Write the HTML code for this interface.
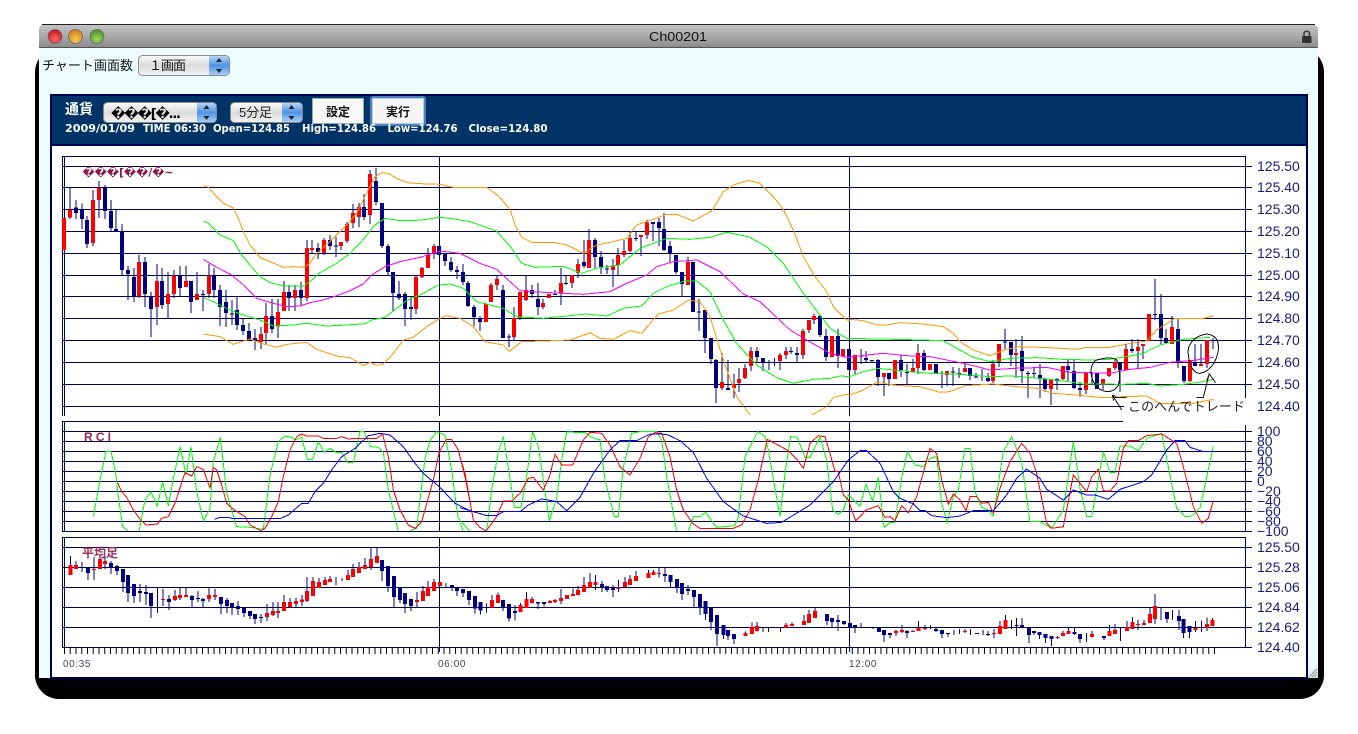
<!DOCTYPE html>
<html><head><meta charset="utf-8"><title>Ch00201</title>
<style>
html,body{margin:0;padding:0;background:#fff;width:1358px;height:734px;overflow:hidden}
svg{display:block;position:absolute;left:0;top:0}
svg path,svg polyline{vector-effect:non-scaling-stroke;fill:none}
.w{stroke:#000078;stroke-width:1;shape-rendering:crispEdges}
.n{stroke:#000080;stroke-width:4;shape-rendering:crispEdges}
.r{stroke:#ff0000;stroke-width:4;shape-rendering:crispEdges}
.l{stroke-width:1;shape-rendering:crispEdges}
.o{stroke:#ff9900}.g{stroke:#00ff00}.m{stroke:#ff00ff}.b{stroke:#0000ff}.d{stroke:#ff0000}
.grid{stroke:#000058;stroke-width:1;shape-rendering:crispEdges;fill:none}
.ax{font:14px "Liberation Sans",sans-serif;fill:#1c1c78}
.hw{stroke:#111;stroke-width:1;fill:none;shape-rendering:crispEdges}
</style></head><body>
<svg width="1358" height="734" viewBox="0 0 1358 734" xmlns="http://www.w3.org/2000/svg">
<defs>
<linearGradient id="tb" x1="0" y1="0" x2="0" y2="1"><stop offset="0" stop-color="#c4c4c4"/><stop offset=".5" stop-color="#a9a9a9"/><stop offset="1" stop-color="#8c8c8c"/></linearGradient>
<linearGradient id="sel" x1="0" y1="0" x2="0" y2="1"><stop offset="0" stop-color="#fbfbfb"/><stop offset=".5" stop-color="#dcdcdc"/><stop offset="1" stop-color="#f2f2f2"/></linearGradient>
<linearGradient id="blu" x1="0" y1="0" x2="0" y2="1"><stop offset="0" stop-color="#b5d3f5"/><stop offset=".5" stop-color="#4f93e6"/><stop offset="1" stop-color="#a6cff5"/></linearGradient>
<radialGradient id="rd" cx=".5" cy=".7" r=".7"><stop offset="0" stop-color="#f56a6a"/><stop offset="1" stop-color="#c0141c"/></radialGradient>
<radialGradient id="ye" cx=".5" cy=".7" r=".7"><stop offset="0" stop-color="#f9c95a"/><stop offset="1" stop-color="#d07a10"/></radialGradient>
<radialGradient id="gr" cx=".5" cy=".7" r=".7"><stop offset="0" stop-color="#a0d865"/><stop offset="1" stop-color="#468c1e"/></radialGradient>
<clipPath id="rc"><rect x="60" y="421" width="1190" height="110"/></clipPath>
<clipPath id="mc"><rect x="60" y="156" width="1190" height="260"/></clipPath>
</defs>

<!-- shadow + window -->
<rect x="35" y="48" width="1289" height="651" rx="24" fill="#000"/>
<path d="M39 678V30Q39 24.500 45 24.500H1312Q1318 24.500 1318 30V678Z" style="fill:#edfdfd"/>
<path d="M39 47.500V30Q39 24.500 45 24.500H1312Q1318 24.500 1318 30V47.500Z" style="fill:url(#tb)"/>
<rect x="42" y="24" width="1273" height="1" fill="#222"/>
<rect x="39" y="47" width="1279" height="1" fill="#555"/>
<circle cx="55" cy="36.500" r="7" fill="url(#rd)" stroke="#666" stroke-width=".7"/>
<circle cx="75.500" cy="36.500" r="7" fill="url(#ye)" stroke="#666" stroke-width=".7"/>
<circle cx="97" cy="36.500" r="7" fill="url(#gr)" stroke="#666" stroke-width=".7"/>
<text x="649" y="41" textLength="58" lengthAdjust="spacingAndGlyphs" style="font:13px 'Liberation Sans',sans-serif;fill:#111">Ch00201</text>
<rect x="1302" y="36" width="9.500" height="7" rx="1" fill="#333"/>
<path d="M1304 36V33.500Q1304 31.300 1306.700 31.300Q1309.500 31.300 1309.500 33.500V36" style="stroke:#333;stroke-width:1.400"/>

<!-- top control -->
<text x="42" y="70" textLength="91" style="font:13px 'Liberation Sans','Noto Sans CJK JP',sans-serif;fill:#111">チャート画面数</text>
<rect x="138.500" y="55.500" width="91" height="20" rx="4" fill="url(#sel)" stroke="#8a8a8a"/>
<path d="M209 56H225Q229 56 229 60V71Q229 75 225 75H209Z" style="fill:url(#blu)"/>
<path d="M216 62L219 58L222 62ZM216 69L219 73L222 69Z" style="fill:#222"/>
<text x="149" y="70" textLength="37" style="font:13px 'Liberation Sans','Noto Sans CJK JP',sans-serif;fill:#111">１画面</text>

<!-- panel -->
<rect x="51" y="95" width="1256" height="583" fill="#fff" stroke="#000050" stroke-width="2"/>
<rect x="51" y="95" width="1256" height="50" fill="#003366" stroke="#000050" stroke-width="2"/>
<text x="65" y="114" textLength="28" style="font:bold 14px 'Liberation Sans','Noto Sans CJK JP',sans-serif;fill:#fff">通貨</text>
<rect x="103.500" y="102.500" width="113" height="20" rx="4" fill="url(#sel)" stroke="#8a8a8a"/>
<path d="M197 103H212Q216 103 216 107V118Q216 122 212 122H197Z" style="fill:url(#blu)"/>
<path d="M203.500 109L206.500 105L209.500 109ZM203.500 116L206.500 120L209.500 116Z" style="fill:#222"/>
<text x="111" y="118" textLength="70" style="font:13px 'DejaVu Sans',sans-serif;fill:#000;font-weight:bold">���[�...</text>
<rect x="230.500" y="102.500" width="72" height="20" rx="4" fill="url(#sel)" stroke="#8a8a8a"/>
<path d="M282 103H298Q302 103 302 107V118Q302 122 298 122H282Z" style="fill:url(#blu)"/>
<path d="M288.500 109L291.500 105L294.500 109ZM288.500 116L291.500 120L294.500 116Z" style="fill:#222"/>
<text x="239" y="117" textLength="33" style="font:13px 'Liberation Sans','Noto Sans CJK JP',sans-serif;fill:#222">5分足</text>
<rect x="312.500" y="98.500" width="51" height="25" fill="#f8f8f8" stroke="#9aa" stroke-width="1"/>
<text x="326" y="116" textLength="24" style="font:bold 12px 'Liberation Sans','Noto Sans CJK JP',sans-serif;fill:#111">設定</text>
<rect x="370" y="96" width="56" height="30" rx="3" fill="#4a7fc0"/>
<rect x="372.500" y="98.500" width="51" height="25" fill="#f5f5f5" stroke="#bcd"/>
<text x="386" y="116" textLength="24" style="font:bold 12px 'Liberation Sans','Noto Sans CJK JP',sans-serif;fill:#111">実行</text>
<g style="font:bold 11px 'DejaVu Sans',sans-serif;fill:#fff">
<text x="65" y="132" textLength="70" lengthAdjust="spacingAndGlyphs">2009/01/09</text>
<text x="143" y="132" textLength="63" lengthAdjust="spacingAndGlyphs">TIME 06:30</text>
<text x="213" y="132" textLength="77" lengthAdjust="spacingAndGlyphs">Open=124.85</text>
<text x="302" y="132" textLength="74" lengthAdjust="spacingAndGlyphs">High=124.86</text>
<text x="387.500" y="132" textLength="70" lengthAdjust="spacingAndGlyphs">Low=124.76</text>
<text x="468.500" y="132" textLength="79" lengthAdjust="spacingAndGlyphs">Close=124.80</text>
</g>

<!-- main grid -->
<path class="grid" d="M62.500 156.500H1246M62 166.500H1252M62 187.500H1252M62 209.500H1252M62 231.500H1252M62 253.500H1252M62 275.500H1252M62 296.500H1252M62 318.500H1252M62 340.500H1252M62 362.500H1252M62 384.500H1252M62 406.500H1252M62.500 156V416M64.500 156V416M439.500 156V416M849.500 156V416M1245.500 156V416"/>
<!-- main candles -->
<g transform="translate(60,150) scale(.33333)">
<path class="w" d="M30 112V207M48 150V207M66 160V237M81 198V294M99 120V288M117 93V204M135 105V207M153 150V243M168 180V246M186 222V375M204 348V450M222 354V456M237 315V444M255 321V471M273 426V561M291 342V525M306 354V477M324 366V504M342 360V444M360 348V438M378 348V411M393 393V489M411 366V450M429 420V483M423 433H435M447 342V444M462 354V444M480 405V528M498 420V531M516 450V525M510 492H522M531 441V540M549 507V555M567 519V570M585 537V600M603 531V597M618 459V582M636 447V549M654 447V564M672 393V483M687 405V483M705 405V483M723 396V468M741 270V453M756 270V312M774 279V327M792 264V315M810 255V300M828 261V321M822 288H834M843 276V300M861 216V279M879 162V234M897 159V231M912 132V210M930 60V222M948 54V165M966 159V294M984 282V375M999 366V483M1017 393V450M1035 426V528M1053 441V510M1068 378V492M1086 351V384M1104 294V354M1122 282V327M1137 288V315"/>
<path class="n" d="M48 172V189M66 178V207M81 210V282M135 112V183M153 183V234M168 237V246M186 244V360M204 360V372M222 381V439M255 336V432M273 439V477M306 393V465M360 376V414M393 393V456M462 376V420M480 420V471M498 456V489M531 480V525M549 525V543M567 543V570M585 564V573M636 498V537M687 426V444M723 420V444M774 294V306M810 270V288M912 171V201M948 93V156M966 159V288M984 288V366M999 366V429M1017 432V444M1035 432V477M1053 471V477M1137 288V315"/>
<path class="r" d="M12 204V300M30 178V202M99 150V279M117 112V150M237 336V439M291 393V471M324 432V462M342 376V432M378 393V411M411 432V450M447 376V432M603 552V576M618 498V549M654 486V529M672 426V483M705 420V444M741 294V444M756 294V300M792 270V309M843 276V288M861 222V273M879 189V219M897 171V201M930 72V195M1068 381V477M1086 354V381M1104 315V354M1122 288V310"/>
</g>
<g transform="translate(440,150) scale(.33333)">
<path class="w" d="M15 310V348M33 321V366M51 348V387M69 342V405M84 393V471M102 465V528M120 498V543M138 459V516M153 399V456M171 378V420M189 405V564M207 552V591M201 561H213M222 471V570M240 426V510M258 378V453M276 405V444M294 399V495M309 447V477M327 432V444M345 420V435M339 433H351M363 354V465M378 378V405M372 400H384M396 375V414M414 327V384M432 270V354M447 237V354M465 264V354M483 303V372M501 345V372M495 357H507M519 327V411M534 294V375M552 270V321M570 243V306M588 243V273M582 266H594M603 258V318M621 210V267M639 216V273M657 204V288M672 189V303M690 273V336M708 315V372M726 366V438M744 321V405M759 336V486M777 447V543M771 486H783M795 480V609M813 564V642M828 627V759M846 609V720M864 630V720M882 672V744M897 654V726M915 642V687M933 591V663M951 591V636M969 624V663M987 630V660M1003 624V648M1020 609V660M1038 591V627M1053 591V612M1047 605H1059M1071 591V637M1089 537V627M1107 510V549M1122 492V522M1140 495V561M1158 537V633M1176 558V621M1194 537V654M1209 597V618M1227 597V660"/>
<path class="n" d="M15 310V333M33 336V360M51 360V366M69 366V396M84 399V468M102 471V501M120 504V516M189 420V564M276 420V432M294 447V471M432 336V348M465 270V321M483 321V351M639 216V222M657 216V234M672 237V300M690 288V310M708 315V366M726 366V402M759 336V486M795 480V564M813 564V627M828 630V714M864 714V720M951 603V621M969 624V636M1071 609V615M1140 498V555M1158 558V621M1194 558V618M1227 597V660"/>
<path class="r" d="M138 462V516M153 405V456M171 387V405M222 504V561M240 426V504M258 420V450M309 459V471M327 432V444M363 399V429M396 375V399M414 342V369M447 270V354M519 348V360M534 315V345M552 303V315M570 264V303M603 255V261M621 217V255M744 336V405M846 696V714M882 702V714M897 687V699M915 654V684M933 603V648M1020 615V633M1038 603V615M1089 543V615M1107 510V540M1122 498V510M1176 558V621M1209 597V618"/>
</g>
<g transform="translate(850,260) scale(.33333)">
<path class="w" d="M15 285V342M33 267V312M27 288H39M48 273V309M66 300V309M60 302H72M84 297V378M102 339V408M117 339V378M135 300V357M153 285V351M171 312V372M165 337H177M189 297V336M204 252V342M222 270V333M240 312V330M258 312V342M276 333V384M291 333V378M309 321V378M303 336H315M327 324V354M321 341H333M345 309V336M360 324V360M378 339V354M372 351H384M396 327V363M414 339V366M429 300V369M447 252V321M465 207V267M459 246H471M483 246V318M498 237V354M516 228V369M534 333V414M528 340H540M552 324V354M546 341H558M570 312V414M585 354V396M603 357V435M621 354V390M639 318V360M654 300V366M672 297V387M690 366V411M708 339V402M726 339V372M741 337V387M759 357V390M777 324V351M795 300V330M810 306V396M828 252V330M846 237V279M864 237V324M879 252V297M897 162V243M915 57V180M909 163H921M933 102V252M948 207V252M966 168V252M984 175V324M1002 318V369M1020 300V366M1035 252V318M1053 252V315M1071 240V324M1089 234V267M1083 242H1095"/>
<path class="n" d="M48 294V300M84 300V351M117 339V357M153 300V330M222 279V330M258 312V342M360 324V348M414 354V363M483 246V285M516 273V333M570 345V357M585 357V387M621 357V363M654 318V330M672 333V384M690 384V390M741 337V387M810 306V330M846 267V273M933 162V234M948 234V249M984 207V306M1002 318V363M1035 309V318"/>
<path class="r" d="M15 285V330M102 339V351M135 300V357M189 324V336M204 279V324M240 312V330M291 333V345M345 324V336M429 312V363M447 252V306M498 279V285M603 357V387M639 318V357M708 339V390M759 357V375M777 324V348M795 306V324M828 267V330M864 261V273M879 252V258M897 162V243M966 201V252M1020 300V363M1053 312V318M1071 240V312"/>
</g>
<!-- main indicator lines -->
<g transform="translate(60,150) scale(.33333)">
<polyline class="l o" points="430,106 445,112 465,135 490,160 520,174 535,205 550,245 570,285 600,322 630,335 670,352 700,350 725,352 745,345 770,310 810,275 860,225 890,190 912,145 930,110 945,80 965,68 985,70 1010,85 1040,98 1080,101 1140,103"/>
<polyline class="l g" points="430,213 445,220 480,255 520,272 545,315 570,345 600,380 630,398 670,408 700,408 730,408 750,395 780,368 830,340 870,310 910,268 945,225 975,205 1020,212 1060,212 1100,208 1140,202"/>
<polyline class="l m" points="430,328 470,352 515,375 550,405 590,445 640,460 680,470 720,468 750,458 790,450 830,437 870,422 910,402 935,375 975,350 1020,335 1080,322 1140,303"/>
<polyline class="l g" points="430,442 470,460 510,480 550,495 600,510 640,528 700,525 740,520 800,528 860,525 915,521 935,510 975,502 1010,475 1040,452 1090,430 1135,405"/>
<polyline class="l o" points="430,552 480,560 520,583 570,567 610,582 650,592 680,583 740,577 770,598 830,618 870,623 910,647 930,637 950,646 970,642 1000,610 1030,570 1060,562 1100,530 1140,505"/>
</g>
<g transform="translate(440,150) scale(.33333)">
<polyline class="l o" points="0,103 40,112 140,112 175,138 210,178 225,225 245,262 275,277 340,277 380,285 430,310 470,285 510,277 560,265 590,225 640,208 680,193 710,193 760,213 815,183 850,125 880,105 925,91 960,100 1000,140 1030,178 1060,240 1090,320 1125,380 1160,425 1180,470 1220,510 1230,512"/>
<polyline class="l g" points="0,202 30,205 90,215 170,243 215,295 245,340 285,352 370,349 425,370 470,355 540,345 600,295 680,265 750,268 810,262 860,247 925,260 980,290 1030,340 1090,430 1140,495 1170,535 1220,565 1230,565"/>
<polyline class="l m" points="0,303 60,310 120,340 170,358 210,395 240,422 290,426 430,433 510,425 560,400 620,375 650,350 700,335 770,330 840,365 910,432 960,455 1050,540 1100,570 1170,610 1220,622 1230,622"/>
<polyline class="l g" points="0,405 30,402 70,415 110,455 190,475 230,500 310,505 440,492 500,498 550,475 605,468 640,430 680,410 735,393 770,393 810,425 850,510 890,580 950,645 1010,683 1060,700 1120,688 1170,685 1200,678 1230,680"/>
<polyline class="l o" points="0,505 20,497 60,505 100,530 135,575 190,585 208,604 245,575 340,572 390,570 450,548 480,565 520,568 570,542 605,550 655,492 700,480 745,450 780,455 810,500 850,630 890,740 930,795"/>
<polyline class="l o" points="1115,795 1160,770 1180,742 1220,733 1230,735"/>
</g>
<g transform="translate(850,260) scale(.33333)">
<polyline class="l o" points="0,178 40,182 80,195 110,195 150,188 220,192 280,200 310,220 330,245 370,270 420,287 470,268 510,260 600,263 680,268 710,262 780,262 840,250 890,243 920,210 975,175 1060,175 1090,168"/>
<polyline class="l g" points="0,235 70,237 140,238 280,242 320,265 370,292 420,305 480,295 560,293 640,298 720,300 780,298 830,290 880,280 930,255 1000,238 1080,232"/>
<polyline class="l m" points="0,291 50,285 100,280 170,287 240,290 290,300 350,312 420,330 490,325 590,322 660,337 720,338 780,340 840,328 900,322 960,307 1040,300 1090,292"/>
<polyline class="l g" points="0,350 40,335 85,325 130,330 180,335 240,340 320,342 420,350 480,348 540,352 620,360 700,372 820,373 890,370 930,378 1000,373 1060,365 1090,358"/>
</g>

<!-- RCI frame -->
<path class="grid" d="M62 421.500H1123M62 431.500H1252M62 441.500H1252M62 451.500H1252M62 461.500H1252M62 471.500H1252M62 481.500H1252M62 491.500H1252M62 501.500H1252M62 511.500H1252M62 521.500H1252M62 531.500H1252M62.500 421V531M64.500 421V531M439.500 421V531M849.500 421V531M1245.500 425V531"/>
<g clip-path="url(#rc)">
<g transform="translate(50,420) scale(.33333)">
<polyline class="l g" points="130,290 150,180 168,94 183,94 198,165 205,230 218,320 235,334 250,350 268,330 285,240 303,215 322,258 338,185 355,258 370,175 391,80 408,165 423,80 440,215 460,302 480,265 490,125 511,52 530,220 560,320 600,322 640,328 660,165 685,65 705,48 725,52 735,60 755,52 772,118 788,118 805,65 823,97 840,85 858,97 875,97 893,127 910,127 930,35 942,35 962,80 985,82 1000,97 1015,210 1045,334 1065,350 1085,330 1100,325 1125,115 1140,62 1160,35 1185,45 1205,150 1220,265 1225,295 1260,334"/>
<polyline class="l d" points="203,188 215,215 230,232 250,270 272,300 288,315 322,312 335,295 355,290 375,250 405,158 425,168 440,140 460,148 480,205 490,142 500,150 515,195 530,250 550,268 585,290 600,315 632,332 645,325 665,290 685,245 700,170 720,90 740,50 755,42 770,48 805,48 820,55 860,55 875,50 895,57 915,55 980,55 998,42 1015,110 1030,210 1050,270 1075,315 1095,325 1115,305 1150,180 1168,95 1190,58 1205,58 1225,90 1245,170 1260,245"/>
<polyline class="l b" points="493,298 510,292 535,292 550,296 690,296 715,285 755,250 775,250 795,215 820,190 845,150 875,110 915,85 955,47 990,40 1020,45 1060,80 1095,130 1120,160 1168,200 1215,250 1260,272"/>
</g>
<g transform="translate(460,420) scale(.33333)">
<polyline class="l g" points="0,310 10,334 45,350 80,330 95,210 115,95 130,50 150,175 163,262 183,262 200,170 218,36 235,80 250,180 268,302 290,235 305,120 320,36 375,38 395,52 420,60 435,180 463,290 475,290 490,140 515,40 540,35 590,35 605,60 620,170 650,334 668,350 685,334 700,290 720,290 737,277 770,322 825,317 835,290 855,110 893,35 915,50 925,90 960,290 975,160 992,50 1012,52 1035,112 1050,112 1080,50 1100,120 1118,270 1135,283 1150,270 1165,225 1200,260"/>
<polyline class="l d" points="0,112 15,160 40,300 60,322 78,333 110,290 130,243 155,243 180,220 205,175 220,172 250,210 270,165 285,103 305,135 338,135 370,60 390,37 425,40 450,75 480,140 510,165 540,115 565,50 585,38 605,40 630,110 650,210 670,270 700,312 720,325 820,325 845,315 870,270 895,180 922,58 985,92 1012,120 1030,145 1050,70 1075,47 1095,50 1110,100 1125,155 1135,155 1150,225 1165,240 1187,303 1200,290"/>
<polyline class="l b" points="0,263 40,275 80,287 110,287 130,275 180,275 205,255 245,237 265,240 290,245 320,272 360,232 400,160 450,90 480,62 530,62 570,42 620,43 660,62 700,97 740,175 790,245 850,288 920,310 965,307 1050,255 1120,185 1165,120 1200,92"/>
</g>
<g transform="translate(860,420) scale(.33333)">
<polyline class="l g" points="0,260 18,192 38,243 55,172 72,322 90,308 105,308 125,175 142,95 165,135 190,140 210,115 230,110 245,250 262,308 280,230 295,210 315,85 330,85 345,215 365,262 385,270 400,288 430,95 455,50 485,125 510,305 540,305 575,325 610,270 640,65 660,205 680,290 695,290 730,95 750,157 765,157 780,78 810,78 835,92 860,55 905,40 925,140 950,265 975,290 995,288 1020,265 1060,78"/>
<polyline class="l d" points="0,290 18,270 55,257 75,292 90,290 105,302 125,257 145,278 170,230 210,85 230,100 245,180 265,252 280,222 300,240 318,272 330,230 350,230 365,250 385,247 400,280 420,205 450,125 485,70 510,100 530,160 560,310 575,325 610,320 640,165 680,215 695,170 715,148 730,212 750,213 770,190 790,85 805,62 835,62 860,47 905,42 950,70 970,140 1000,260 1025,310 1045,295 1060,242"/>
<polyline class="l b" points="0,92 20,92 60,130 100,215 120,235 160,252 180,272 195,272 215,287 260,293 300,288 340,272 400,272 440,225 470,175 500,147 540,175 560,208 610,240 640,210 680,225 705,225 745,238 780,208 850,185 875,165 920,90 945,62 975,62 990,82 1030,95 1060,95"/>
</g>
</g>

<!-- Heikin frame -->
<path class="grid" d="M62 537.500H1246M62 547.500H1252M62 567.500H1252M62 587.500H1252M62 607.500H1252M62 627.500H1252M62 647.500H1252M62.500 537V647M64.500 537V647M439.500 537V652M849.500 537V652M1245.500 537V647"/>
<line x1="64" y1="651" x2="1215" y2="651" stroke="#000" stroke-width="6" stroke-dasharray="1 4.750"/>
<g transform="translate(50,530) scale(.33333)">
<path class="w" d="M61 78V135M78 93V117M96 96V126M114 112V150M132 81V150M150 72V117M165 78V117M183 93V132M201 105V135M219 117V186M234 135V216M252 162V219M270 162V216M288 165V225M303 189V264M323 174V249M339 177V228M357 195V240M375 180V213M390 174V210M408 174V198M426 195V231M444 183V216M459 204V234M477 174V216M495 177V210M513 201V252M531 204V249M546 219V255M564 213V255M582 234V261M600 243V267M615 252V282M633 252V279M651 222V273M669 216V258M684 216V264M702 195V243M720 204V231M738 204V231M756 195V228M771 141V216M789 141V198M807 144V174M825 141V165M840 138V156M858 141V165M876 144V153M894 120V150M909 102V141M927 96V129M945 84V117M963 54V120M981 54V99M996 90V153M1014 108V186M1032 138V232M1050 171V219M1065 189V249M1083 207V243M1101 186V232M1119 168V213M1134 153V198M1152 147V183M1170 156V168M1188 159V171M1206 165V183M1221 172V198M1239 177V201M1257 183V225"/>
<path class="n" d="M114 112V129M183 99V113M201 108V123M219 117V156M234 135V189M252 162V198M270 183V189M288 186V192M303 189V228M357 207V216M426 198V210M444 204V207M459 207V213M513 201V222M531 210V228M546 219V234M564 228V237M582 234V249M600 243V258M615 252V267M633 261V264M996 90V123M1014 108V168M1032 138V201M1050 171V210M1065 189V222M1083 207V228M1206 165V172M1221 172V183M1239 177V189M1257 183V210"/>
<path class="r" d="M61 105V135M78 105V117M132 117V120M150 87V117M165 93V102M339 207V210M375 198V210M390 195V204M408 195V201M477 195V207M495 195V201M651 249V261M669 243V255M684 243V249M702 216V243M720 216V231M738 213V222M756 209V216M771 183V213M789 153V198M807 156V174M825 150V165M840 147V156M894 135V150M909 117V141M927 111V129M945 105V117M963 87V111M981 78V99M1101 210V216M1119 183V213M1134 171V198M1152 156V183M1170 156V168"/>
</g>
<g transform="translate(460,535) scale(.51020,.33333)">
<path class="w" d="M29 183V235M40 201V238M52 205V232M63 180V217M74 172V204M84 195V228M96 207V260M108 210V256M119 204V231M130 171V219M141 186V205M153 201V222M165 201V214M176 195V204M186 192V204M198 162V207M210 180V192M221 160V183M231 153V180M243 126V171M255 114V159M266 120V165M278 138V171M288 153V171M300 150V186M311 135V171M323 126V156M333 120V150M345 108V138M369 105V129M379 105V120M390 96V128M402 98V141M413 120V156M425 132V174M435 144V195M447 150V180M459 165V216M470 177V240M481 198V255M492 216V285M504 240V333M516 270V312M525 285V315M537 297V327M560 290V303M572 262V297M582 261V290M594 277V291M605 279V291M628 276V291M639 264V279M651 262V273M674 240V270M684 225V264M696 219V249M719 237V270M729 249V276M741 240V288M753 258V270M764 264V276M774 270V294M786 264V279M798 276V279M809 279V282M821 276V291M831 285V321M843 294V309M855 285V303M866 270V294M876 285V309M888 285V291M899 258V288M911 270V285M922 270V282M933 279V291M945 285V309M956 294V306M968 285V300M979 282V297M990 282V294M1001 282V300M1025 285V300M1035 288V303M1047 282V309M1058 258V297M1069 240V282M1081 255V282M1091 249V303M1102 249V276M1115 279V324M1125 288V300M1136 291V312M1148 297V324M1159 303V333M1171 303V312M1182 288V303M1193 279V297M1204 279V300M1215 297V324M1228 294V321M1239 288V306M1262 303V315M1273 270V303M1284 267V297M1295 279V318M1307 258V288M1318 246V282M1329 255V285M1341 255V270M1352 219V264M1362 177V267M1374 219V255M1386 231V264M1397 225V255M1409 225V285M1418 252V309M1430 273V309M1442 258V291M1453 256V291M1464 247V288M1475 249V273"/>
<path class="n" d="M29 183V221M40 201V227M84 195V217M96 207V251M108 228V234M153 201V205M165 201V207M278 147V156M288 153V165M300 159V165M402 117V123M413 120V141M425 132V156M435 144V177M447 162V168M459 165V186M470 177V219M481 198V237M492 216V261M504 240V297M516 270V300M525 285V303M537 297V312M719 237V258M729 249V261M741 255V261M753 258V267M764 264V276M774 270V276M821 279V291M831 285V300M843 294V300M876 288V294M933 282V288M945 285V297M956 294V297M1013 294V297M1035 297V300M1091 270V273M1102 270V276M1115 279V300M1125 288V294M1136 291V300M1148 297V309M1159 303V312M1204 291V297M1215 297V312M1262 303V309M1386 231V252M1409 243V258M1418 252V294M1430 273V291"/>
<path class="r" d="M63 195V217M74 180V204M119 210V231M130 192V219M141 192V204M176 198V204M186 195V201M198 189V198M210 180V192M221 177V183M231 165V180M243 150V171M255 141V159M266 141V150M311 156V162M323 141V156M333 132V150M345 123V138M369 114V129M379 111V120M390 114V117M560 294V303M572 276V297M582 273V288M639 270V279M651 267V273M674 258V270M684 237V264M696 228V249M855 288V294M866 285V291M888 288V291M899 279V288M911 279V282M990 288V291M1047 294V297M1058 273V297M1069 255V282M1171 306V309M1182 294V303M1193 288V297M1239 297V306M1273 288V303M1284 285V297M1307 276V288M1318 261V282M1329 267V270M1341 264V270M1352 237V264M1362 213V252M1442 279V285M1464 267V279M1475 255V273"/>
</g>

<!-- annotation box -->
<rect x="1124" y="398" width="130" height="23" fill="#fff"/>
<rect x="1245" y="396" width="1" height="2" fill="#000060"/>
<g transform="translate(850,260) scale(.33333)">
<polyline class="l o" points="0,405 40,390 80,367 140,376 210,380 270,397 300,395 345,377 430,372 470,377 560,385 610,400 680,405 760,413 820,410 890,408 930,430 1030,430 1090,418"/>
<path class="hw" d="M740 300C760 296 780 288 800 300C810 320 812 350 805 375C795 395 770 402 745 385C725 365 720 340 725 320C728 310 733 303 740 300Z"/>
<path class="hw" d="M787 405L815 450M787 405L800 412M787 405L791 422M795 413H830"/>
<path class="hw" d="M1070 222C1095 225 1108 240 1105 270C1100 305 1080 335 1050 340C1025 340 1012 300 1015 265C1025 235 1050 225 1070 222Z"/>
<path class="hw" d="M1078 340L1060 412H1040M1078 342L1097 368M1078 342L1070 362"/>
</g>
<text x="1128" y="411" textLength="117" style="font:13px 'Liberation Sans','Noto Sans CJK JP',sans-serif;fill:#222">このへんでトレード</text>

<!-- labels -->
<text x="82.500" y="176" textLength="91" lengthAdjust="spacingAndGlyphs" style="font:bold 11px 'DejaVu Sans',sans-serif;fill:#8b1440">���[��/�~</text>
<text x="84" y="441" textLength="30" style="font:bold 12px 'Liberation Sans',sans-serif;fill:#a0204f;letter-spacing:3px">R C I</text>
<text x="82" y="557" textLength="36" style="font:bold 12px 'Liberation Sans','Noto Sans CJK JP',sans-serif;fill:#a03058">平均足</text>
<g style="font:10px 'Liberation Sans',sans-serif;fill:#445" letter-spacing=".6">
<text x="63" y="667">00:35</text><text x="438" y="667">06:00</text><text x="849" y="667">12:00</text>
</g>
<g class="ax">
<text x="1257" y="171">125.50</text><text x="1257" y="192">125.40</text><text x="1257" y="214">125.30</text><text x="1257" y="236">125.20</text><text x="1257" y="258">125.10</text><text x="1257" y="280">125.00</text><text x="1257" y="301">124.90</text><text x="1257" y="323">124.80</text><text x="1257" y="345">124.70</text><text x="1257" y="367">124.60</text><text x="1257" y="389">124.50</text><text x="1257" y="411">124.40</text>
<text x="1257" y="436">100</text><text x="1257" y="446">80</text><text x="1257" y="456">60</text><text x="1257" y="466">40</text><text x="1257" y="476">20</text><text x="1257" y="486">0</text><text x="1257" y="496">−20</text><text x="1257" y="506">−40</text><text x="1257" y="516">−60</text><text x="1257" y="526">−80</text><text x="1257" y="536">−100</text>
<text x="1257" y="552">125.50</text><text x="1257" y="572">125.28</text><text x="1257" y="592">125.06</text><text x="1257" y="612">124.84</text><text x="1257" y="632">124.62</text><text x="1257" y="652">124.40</text>
</g>

<!-- resize grip -->
<rect x="1308" y="668" width="10" height="10" fill="#e4efef"/>
<path d="M1309 677L1317 669M1312 677L1317 672M1315 677L1317 675" style="stroke:#8a9a9a;stroke-width:1"/>
</svg>
</body></html>
